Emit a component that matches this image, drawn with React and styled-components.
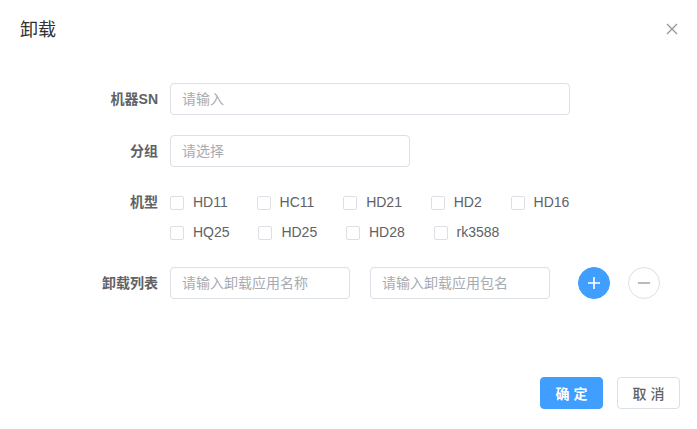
import React, { useState } from "react"
import styled, { createGlobalStyle } from "styled-components"

const GlobalStyle = createGlobalStyle`
  html, body {
    margin: 0;
    padding: 0;
    background: #fff;
    overflow: hidden;
  }
  body {
    font-family: "Liberation Sans", "Noto Sans CJK SC", sans-serif;
    color: #606266;
  }
  * {
    box-sizing: border-box;
  }
`

const Dialog = styled.div`
  width: 697px;
  height: 429px;
  display: flex;
  flex-direction: column;
  background: #fff;
`

const Header = styled.div`
  display: flex;
  align-items: center;
  justify-content: space-between;
  padding: 18px 17px 10px 20px;
`

const Title = styled.span`
  font-size: 18px;
  line-height: 24px;
  color: #303133;
`

const CloseButton = styled.button`
  width: 16px;
  height: 16px;
  padding: 0;
  border: none;
  background: none;
  display: flex;
  align-items: center;
  justify-content: center;
  cursor: pointer;
  margin-top: -3px;
`

const Body = styled.div`
  padding: 31px 20px 0;
`

const FormItem = styled.div`
  display: flex;
  align-items: flex-start;
  margin-bottom: 20px;
`

const Label = styled.label`
  width: 150px;
  flex-shrink: 0;
  padding-right: 12px;
  text-align: right;
  font-size: 14px;
  font-weight: 700;
  line-height: ${p => p.$lh || 32}px;
  color: #606266;
`

const Input = styled.input`
  width: ${p => p.$width}px;
  height: 32px;
  padding: 0 11px;
  border: 1px solid #dcdfe6;
  border-radius: 4px;
  font-family: inherit;
  font-size: 14px;
  color: #606266;
  outline: none;
  &::placeholder {
    color: #a8abb2;
  }
`

const CheckGroup = styled.div`
  width: 450px;
  display: flex;
  flex-wrap: wrap;
`

const CheckItem = styled.label`
  display: flex;
  align-items: center;
  height: 30px;
  margin-right: 28.8px;
  font-size: 14px;
  color: #606266;
  cursor: pointer;
`

const Box = styled.span`
  width: 14px;
  height: 14px;
  border: 1px solid #dcdfe6;
  border-radius: 2px;
  background: ${p => (p.$checked ? "#409eff" : "#fff")};
  margin-right: 9px;
  margin-top: 1px;
`

const ListRow = styled.div`
  display: flex;
  align-items: center;
  gap: 20px;
`

const CircleRow = styled.div`
  display: flex;
  gap: 18px;
  margin-left: 8px;
`

const Circle = styled.button`
  width: 32px;
  height: 32px;
  padding: 0;
  border-radius: 50%;
  border: 1px solid ${p => (p.$primary ? "#409eff" : "#dcdfe6")};
  background: ${p => (p.$primary ? "#409eff" : "#fff")};
  display: flex;
  align-items: center;
  justify-content: center;
  cursor: pointer;
`

const Footer = styled.div`
  margin-top: auto;
  display: flex;
  justify-content: flex-end;
  gap: 14px;
  padding: 0 17px 20px 20px;
`

const Button = styled.button`
  width: 63px;
  height: 32px;
  padding: 0;
  border-radius: 4px;
  border: 1px solid ${p => (p.$primary ? "#409eff" : "#dcdfe6")};
  background: ${p => (p.$primary ? "#409eff" : "#fff")};
  color: ${p => (p.$primary ? "#fff" : "#606266")};
  font-family: inherit;
  font-size: 14px;
  font-weight: ${p => (p.$primary ? 700 : 500)};
  cursor: pointer;
`

const models = ["HD11", "HC11", "HD21", "HD2", "HD16", "HQ25", "HD25", "HD28", "rk3588"]

const App = () => {
  const [checked, setChecked] = useState([])

  const toggle = m => {
    setChecked(c => (c.includes(m) ? c.filter(x => x !== m) : [...c, m]))
  }

  return (
    <Dialog>
      <GlobalStyle />
      <Header>
        <Title>卸载</Title>
        <CloseButton>
          <svg width="12" height="12" viewBox="0 0 12 12">
            <path d="M1 1L11 11M11 1L1 11" stroke="#909399" strokeWidth="1.2" />
          </svg>
        </CloseButton>
      </Header>
      <Body>
        <FormItem>
          <Label>机器SN</Label>
          <Input $width={400} placeholder="请输入" />
        </FormItem>
        <FormItem>
          <Label>分组</Label>
          <Input $width={240} placeholder="请选择" />
        </FormItem>
        <FormItem>
          <Label $lh={30}>机型</Label>
          <CheckGroup>
            {models.map(m => (
              <CheckItem key={m} onClick={() => toggle(m)}>
                <Box $checked={checked.includes(m)} />
                {m}
              </CheckItem>
            ))}
          </CheckGroup>
        </FormItem>
        <FormItem>
          <Label>卸载列表</Label>
          <ListRow>
            <Input $width={180} placeholder="请输入卸载应用名称" />
            <Input $width={180} placeholder="请输入卸载应用包名" />
            <CircleRow>
              <Circle $primary>
                <svg width="14" height="14" viewBox="0 0 14 14">
                  <path d="M7 1V13M1 7H13" stroke="#fff" strokeWidth="1.6" />
                </svg>
              </Circle>
              <Circle>
                <svg width="14" height="14" viewBox="0 0 14 14">
                  <path d="M1 7H13" stroke="#b1b3b8" strokeWidth="1.8" />
                </svg>
              </Circle>
            </CircleRow>
          </ListRow>
        </FormItem>
      </Body>
      <Footer>
        <Button $primary>确 定</Button>
        <Button>取 消</Button>
      </Footer>
    </Dialog>
  )
}

export default App
